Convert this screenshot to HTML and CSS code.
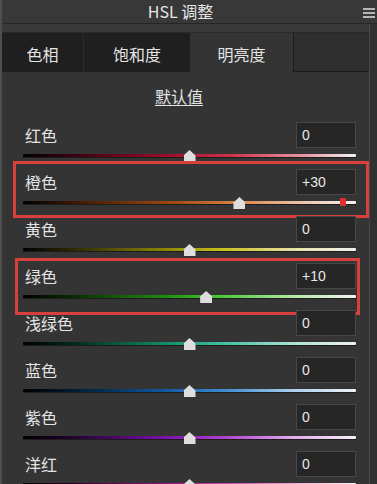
FILE: index.html
```html
<!DOCTYPE html>
<html lang="zh">
<head>
<meta charset="utf-8">
<title>HSL 调整</title>
<link rel="stylesheet" href="styles.css">
</head>
<body>
<div class="app">
  <header class="titlebar">
    <span class="title">HSL 调整</span>
    <svg class="menu" width="12" height="10" viewBox="0 0 12 10"><rect x="0" y="0" width="12" height="2" fill="#b8b8b8"/><rect x="0" y="4" width="12" height="2" fill="#b8b8b8"/><rect x="0" y="8" width="12" height="2" fill="#b8b8b8"/></svg>
  </header>
  <div class="body">
    <div class="main">
      <div class="spacer"></div>
      <nav class="tabs">
        <div class="tab t1">色相</div>
        <div class="tab t2">饱和度</div>
        <div class="tab t3 active">明亮度</div>
        <div class="tab t4"></div>
      </nav>
      <section class="panel">
        <div class="defaults"><span class="link">默认值</span></div>

        <div class="row">
          <div class="head"><span class="label">红色</span><div class="value">0</div></div>
          <div class="slider"><div class="track red"></div><div class="thumb" style="left:50%"></div></div>
        </div>

        <div class="row mark mark-1">
          <div class="head"><span class="label">橙色</span><div class="value">+30</div></div>
          <div class="slider"><div class="track orange"></div><div class="pin"></div><div class="thumb" style="left:65%"></div></div>
        </div>

        <div class="row">
          <div class="head"><span class="label">黄色</span><div class="value">0</div></div>
          <div class="slider"><div class="track yellow"></div><div class="thumb" style="left:50%"></div></div>
        </div>

        <div class="row mark mark-2">
          <div class="head"><span class="label">绿色</span><div class="value">+10</div></div>
          <div class="slider"><div class="track green"></div><div class="thumb" style="left:55%"></div></div>
        </div>

        <div class="row">
          <div class="head"><span class="label">浅绿色</span><div class="value">0</div></div>
          <div class="slider"><div class="track aqua"></div><div class="thumb" style="left:50%"></div></div>
        </div>

        <div class="row">
          <div class="head"><span class="label">蓝色</span><div class="value">0</div></div>
          <div class="slider"><div class="track blue"></div><div class="thumb" style="left:50%"></div></div>
        </div>

        <div class="row">
          <div class="head"><span class="label">紫色</span><div class="value">0</div></div>
          <div class="slider"><div class="track purple"></div><div class="thumb" style="left:50%"></div></div>
        </div>

        <div class="row">
          <div class="head"><span class="label">洋红</span><div class="value">0</div></div>
          <div class="slider"><div class="track magenta"></div><div class="thumb" style="left:50%"></div></div>
        </div>
      </section>
    </div>
    <div class="edge"></div>
  </div>
</div>
</body>
</html>
```

FILE: styles.css
```css
* { box-sizing: border-box; margin: 0; padding: 0; }

html, body {
  width: 377px;
  height: 484px;
  overflow: hidden;
}

body {
  background: #343434;
  font-family: "Noto Sans CJK SC", "Noto Sans", sans-serif;
  color: #e2e2e2;
}

.app {
  height: 484px;
  border-left: 2px solid #4e4e4e;
  display: flex;
  flex-direction: column;
  overflow: hidden;
}

.titlebar {
  height: 24px;
  flex: none;
  background: #383838;
  border-bottom: 1px solid #262626;
  display: flex;
  align-items: center;
  justify-content: center;
  position: relative;
  padding-right: 18px;
}

.title {
  font-size: 16px;
  line-height: 23px;
  color: #e6e6e6;
}

.menu {
  position: absolute;
  right: 2px;
  top: 8px;
}

.body {
  flex: 1;
  display: flex;
  min-height: 0;
  overflow: hidden;
}

.main {
  flex: 1;
  display: flex;
  flex-direction: column;
  overflow: hidden;
}

.edge {
  width: 8px;
  flex: none;
  background: #313131;
  border-left: 1px solid #474747;
}

.spacer {
  flex: none;
  height: 9px;
  background: #393939;
  border-bottom: 1px solid #2a2a2a;
}

.tabs {
  flex: none;
  height: 39px;
  display: flex;
}

.tab {
  display: flex;
  align-items: center;
  justify-content: center;
  font-size: 16px;
  color: #e4e4e4;
  background: #1f1f1f;
  padding-top: 3px;
}

.t1 { width: 81px; }
.t2 { width: 107px; border-left: 1px solid #2a2a2a; }
.t3 { width: 103px; }
.t4 { flex: 1; }

.tab.active {
  background: #343434;
}

.tab.t4 {
  background: #2f2f2f;
  border-left: 1px solid #1b1b1b;
  border-bottom: 1px solid #1b1b1b;
}

.panel {
  flex: none;
  padding-right: 13px;
}

.defaults {
  height: 48px;
  display: flex;
  align-items: center;
  justify-content: center;
}

.link {
  font-size: 16px;
  line-height: 20px;
  color: #e4e4e4;
  text-decoration: underline;
  text-underline-offset: 2px;
}

.row {
  height: 47px;
  padding-top: 2px;
  position: relative;
}

.head {
  height: 26px;
  display: flex;
  align-items: center;
  justify-content: space-between;
  padding-left: 23px;
}

.label {
  font-size: 16px;
  line-height: 26px;
  color: #e4e4e4;
}

.value {
  width: 60px;
  height: 26px;
  background: #262626;
  border: 1px solid #474747;
  font-family: "Liberation Sans", Arial, sans-serif;
  font-size: 14px;
  line-height: 24px;
  padding-left: 5px;
  color: #e8e8e8;
}

.slider {
  position: relative;
  height: 19px;
  margin-left: 21px;
}

.track {
  position: absolute;
  left: 0;
  right: 0;
  top: 6px;
  height: 3px;
  border-radius: 1px;
  box-shadow: 0 1px 0 #1c1c1c;
}

.red     { background: linear-gradient(90deg, #000 0%, #3a0010 15%, #a0102c 45%, #d0304a 62%, #e89aa6 85%, #f2f2f2 100%); }
.orange  { background: linear-gradient(90deg, #000 0%, #3a1600 15%, #a04a10 45%, #d8864a 65%, #efc8b0 85%, #f2f2f2 100%); }
.yellow  { background: linear-gradient(90deg, #000 0%, #2c2a00 15%, #8a8400 42%, #c8c020 60%, #e8e4a8 82%, #f2f2f2 100%); }
.green   { background: linear-gradient(90deg, #000 0%, #0a2c00 15%, #1e8a10 42%, #44c830 58%, #b8e8a8 82%, #f2f2f2 100%); }
.aqua    { background: linear-gradient(90deg, #000 0%, #00281e 15%, #108a68 42%, #40c0a0 60%, #b0e4d8 82%, #f2f2f2 100%); }
.blue    { background: linear-gradient(90deg, #000 0%, #001a30 15%, #1058a0 42%, #3c8ad0 60%, #b0d0ec 82%, #f2f2f2 100%); }
.purple  { background: linear-gradient(90deg, #000 0%, #200030 15%, #7a10a8 42%, #b040d0 60%, #e0b0ec 82%, #f2f2f2 100%); }
.magenta { background: linear-gradient(90deg, #000 0%, #2a0020 15%, #a01078 42%, #d040a8 60%, #ecb0d8 82%, #f2f2f2 100%); }

.thumb {
  position: absolute;
  top: 2px;
  width: 12px;
  height: 12px;
  margin-left: -6px;
  background: #dedede;
  clip-path: polygon(50% 0, 100% 45%, 100% 100%, 0 100%, 0 45%);
}

.pin {
  position: absolute;
  left: 317px;
  top: 3px;
  width: 6px;
  height: 8px;
  background: #e0302e;
  border-radius: 1px;
}

.mark::after {
  content: "";
  position: absolute;
  border: 3px solid #d8403e;
  pointer-events: none;
}

.mark-1::after {
  top: -6px;
  bottom: -4px;
  left: 11px;
  right: -13px;
}

.mark-2::after {
  top: -3px;
  bottom: -7px;
  left: 13px;
  right: -4px;
}
```
